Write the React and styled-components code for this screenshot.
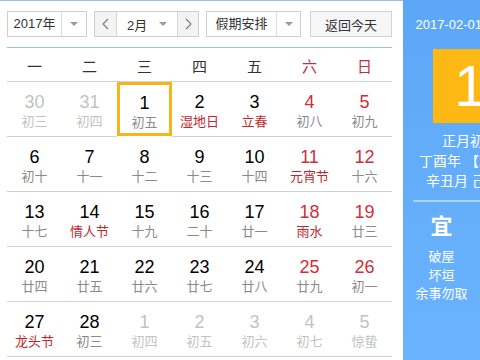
import React from "react";
import styled, { createGlobalStyle } from "styled-components";

const Global = createGlobalStyle`
  html, body { margin: 0; padding: 0; background: #fff; }
  body { font-family: "Liberation Sans", "Noto Sans CJK SC", sans-serif; }
  * { box-sizing: border-box; }
`;

const Page = styled.div`
  display: flex;
  width: 480px;
  height: 360px;
  overflow: hidden;
`;

const Main = styled.div`
  flex: 0 0 403px;
  border-top: 1px solid #9cc0e6;
  padding: 10px 11px 0 7px;
  display: flex;
  flex-direction: column;
`;

const Toolbar = styled.div`
  display: flex;
  height: 26px;
  font-size: 13px;
  color: #333;
`;

const Box = styled.div`
  display: flex;
  width: ${(p) => p.w}px;
  margin-left: ${(p) => p.ml || 0}px;
  border: 1px solid #cfcfcf;
  background: #fff;
`;

const BoxText = styled.div`
  flex: 1;
  display: flex;
  align-items: center;
  justify-content: center;
  line-height: 24px;
`;

const ArrowCell = styled.div`
  flex: 0 0 ${(p) => p.w}px;
  display: flex;
  align-items: center;
  justify-content: center;
  border-left: 1px solid #dcdcdc;
`;

const Caret = styled.span`
  width: 0;
  height: 0;
  border-left: 4px solid transparent;
  border-right: 4px solid transparent;
  border-top: 4px solid #9a9a9a;
`;

const NavBtn = styled.div`
  flex: 0 0 ${(p) => p.w}px;
  display: flex;
  align-items: center;
  justify-content: center;
  background: #f3f3f3;
  border-left: ${(p) => (p.side === "right" ? "1px solid #d6d6d6" : "none")};
  border-right: ${(p) => (p.side === "left" ? "1px solid #d6d6d6" : "none")};
`;

const MonthMid = styled.div`
  flex: 1;
  display: flex;
  align-items: center;
  padding-left: 10px;
  padding-right: 10px;
  justify-content: space-between;
`;

const Button = styled.div`
  width: 82px;
  margin-left: 9px;
  border: 1px solid #d3d3d3;
  background: #f6f6f6;
  display: flex;
  align-items: center;
  justify-content: center;
  color: #333;
`;

const BlueRule = styled.div`
  margin-top: 10px;
  height: 1px;
  background: #96bde4;
`;

const Grid = styled.div`
  display: grid;
  grid-template-columns: repeat(7, 55px);
`;

const HeadCell = styled.div`
  height: 34px;
  border-bottom: 1px solid #d2d2d2;
  display: flex;
  align-items: center;
  justify-content: center;
  font-size: 15px;
  color: ${(p) => (p.weekend ? "#b8343d" : "#333")};
  padding-top: 1px;
`;

const DayCell = styled.div`
  height: 55px;
  border-bottom: 1px solid #d2d2d2;
  display: flex;
  flex-direction: column;
  align-items: center;
  padding-top: ${(p) => (p.today ? 8 : 10)}px;
  ${(p) => p.today && `
    border: 3px solid #f6b61b;
    height: 54px;
    margin-bottom: 1px;
  `}
`;

const Num = styled.div`
  font-size: 18px;
  line-height: 20px;
  color: ${(p) => p.c};
`;

const Lunar = styled.div`
  margin-top: 2px;
  font-size: 13px;
  line-height: 16px;
  color: ${(p) => p.c};
`;

const Panel = styled.div`
  flex: 0 0 134px;
  min-width: 0;
  background: linear-gradient(#5ca7f6, #6bb3fd);
  padding: 15px 10px 0;
  display: flex;
  flex-direction: column;
  align-items: stretch;
  color: #fff;
`;

const DateLine = styled.div`
  font-size: 13px;
  line-height: 20px;
  text-align: center;
  white-space: nowrap;
`;

const BigDay = styled.div`
  align-self: center;
  margin-top: 14px;
  width: 74px;
  height: 74px;
  background: #fdb813;
  display: flex;
  align-items: center;
  justify-content: center;
  font-size: 57px;
  line-height: 1;
  color: #fff;
`;

const LunarBlock = styled.div`
  margin-top: 8px;
  display: flex;
  flex-direction: column;
  align-items: center;
`;

const LunarLine = styled.div`
  font-size: 14px;
  line-height: 20px;
  white-space: nowrap;
`;

const Sep = styled.div`
  margin-top: 9px;
  height: 2px;
  background: rgba(255, 255, 255, 0.45);
`;

const YiJi = styled.div`
  display: grid;
  grid-template-columns: 57px 57px;
  column-gap: 40px;
  margin-top: 11px;
`;

const YiCol = styled.div`
  display: flex;
  flex-direction: column;
  align-items: center;
`;

const YiTitle = styled.div`
  font-size: 22px;
  line-height: 28px;
  font-weight: bold;
  margin-bottom: 7px;
`;

const YiItem = styled.div`
  font-size: 13px;
  line-height: 18.5px;
  white-space: nowrap;
`;

const Chevron = ({ dir }) => (
  <svg width="7" height="12" viewBox="0 0 7 12">
    <path
      d={dir === "left" ? "M6 1 L1 6 L6 11" : "M1 1 L6 6 L1 11"}
      fill="none"
      stroke="#777"
      strokeWidth="1.1"
    />
  </svg>
);

const RED = "#cf2f3a";
const FEST = "#c1272d";
const GRAY = "#8a8a8a";
const OTHER = "#c2c2c2";

// [num, lunar, flags] flags: o=other month, f=festival, t=today
const days = [
  [30, "初三", "o"], [31, "初四", "o"], [1, "初五", "t"], [2, "湿地日", "f"], [3, "立春", "f"], [4, "初八", ""], [5, "初九", ""],
  [6, "初十", ""], [7, "十一", ""], [8, "十二", ""], [9, "十三", ""], [10, "十四", ""], [11, "元宵节", "f"], [12, "十六", ""],
  [13, "十七", ""], [14, "情人节", "f"], [15, "十九", ""], [16, "二十", ""], [17, "廿一", ""], [18, "雨水", "f"], [19, "廿三", ""],
  [20, "廿四", ""], [21, "廿五", ""], [22, "廿六", ""], [23, "廿七", ""], [24, "廿八", ""], [25, "廿九", ""], [26, "初一", ""],
  [27, "龙头节", "f"], [28, "初三", ""], [1, "初四", "o"], [2, "初五", "o"], [3, "初六", "o"], [4, "初七", "o"], [5, "惊蛰", "o"],
];

const weekdays = ["一", "二", "三", "四", "五", "六", "日"];

export default function App() {
  return (
    <>
      <Global />
      <Page>
        <Main>
          <Toolbar>
            <Box w={80}>
              <BoxText>2017年</BoxText>
              <ArrowCell w={25}><Caret /></ArrowCell>
            </Box>
            <Box w={105} ml={7}>
              <NavBtn w={22} side="left"><Chevron dir="left" /></NavBtn>
              <MonthMid>
                <span>2月</span>
                <Caret />
              </MonthMid>
              <NavBtn w={21} side="right"><Chevron dir="right" /></NavBtn>
            </Box>
            <Box w={95} ml={7}>
              <BoxText>假期安排</BoxText>
              <ArrowCell w={24}><Caret /></ArrowCell>
            </Box>
            <Button>返回今天</Button>
          </Toolbar>
          <BlueRule />
          <Grid>
            {weekdays.map((w, i) => (
              <HeadCell key={w} weekend={i >= 5}>{w}</HeadCell>
            ))}
            {days.map(([n, l, f], i) => {
              const col = i % 7;
              const other = f === "o";
              const weekend = col >= 5;
              const numColor = other ? OTHER : weekend ? RED : "#000";
              const lunarColor = other ? OTHER : f === "f" ? FEST : GRAY;
              return (
                <DayCell key={i} today={f === "t"}>
                  <Num c={numColor}>{n}</Num>
                  <Lunar c={lunarColor}>{l}</Lunar>
                </DayCell>
              );
            })}
          </Grid>
        </Main>
        <Panel>
          <DateLine>2017-02-01 星期三</DateLine>
          <BigDay>1</BigDay>
          <LunarBlock>
            <LunarLine>正月初五</LunarLine>
            <LunarLine>丁酉年 【鸡年】</LunarLine>
            <LunarLine>辛丑月 己亥日</LunarLine>
          </LunarBlock>
          <Sep />
          <YiJi>
            <YiCol>
              <YiTitle>宜</YiTitle>
              <YiItem>破屋</YiItem>
              <YiItem>坏垣</YiItem>
              <YiItem>余事勿取</YiItem>
            </YiCol>
            <YiCol>
              <YiTitle>忌</YiTitle>
              <YiItem>诸事不宜</YiItem>
            </YiCol>
          </YiJi>
        </Panel>
      </Page>
    </>
  );
}
